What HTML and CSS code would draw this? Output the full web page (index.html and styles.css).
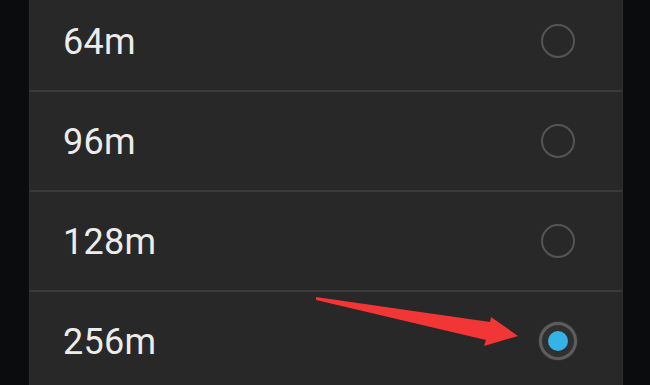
FILE: index.html
```html
<!DOCTYPE html>
<html>
<head>
<meta charset="utf-8">
<link rel="stylesheet" href="styles.css">
</head>
<body>
<div class="screen">
  <div class="panel">
    <div class="row"><span class="label">64m</span><span class="radio"></span></div>
    <div class="row"><span class="label">96m</span><span class="radio"></span></div>
    <div class="row"><span class="label">128m</span><span class="radio"></span></div>
    <div class="row"><span class="label">256m</span><span class="radio checked"></span></div>
  </div>
  <svg class="arrow" width="650" height="385" viewBox="0 0 650 385">
    <polygon points="316,297 490,322 491,317 518,336 484,346 486,340 316,300" fill="#f23535"/>
  </svg>
</div>
</body>
</html>
```

FILE: styles.css
```css
html, body {
  margin: 0;
  padding: 0;
  background: #0b0c0e;
  overflow: hidden;
}
.screen {
  position: relative;
  width: 650px;
  height: 385px;
  overflow: hidden;
}
.panel {
  width: 594px;
  margin-left: 29px;
  margin-top: -8px;
  background: #282828;
  display: flex;
  flex-direction: column;
  border-left: 1px solid #2e2e2e;
  border-right: 1px solid #2e2e2e;
  box-sizing: border-box;
}
.row {
  height: 100px;
  box-sizing: border-box;
  display: flex;
  align-items: center;
  justify-content: space-between;
  padding: 0 47px 0 33px;
  border-bottom: 2px solid #3a3a3a;
}
.label {
  font-family: Roboto, "Noto Sans", sans-serif;
  font-size: 36px;
  color: #ececec;
  line-height: 1;
  margin-top: 2px;
  letter-spacing: 0.3px;
}
.radio {
  width: 34px;
  height: 34px;
  border-radius: 50%;
  border: 2px solid #555555;
  box-sizing: border-box;
  display: flex;
  align-items: center;
  justify-content: center;
}
.radio.checked {
  width: 38px;
  height: 38px;
  margin-right: -2px;
  border: 3px solid #5d5d5d;
  background: #303030;
  box-shadow: 0 0 2px rgba(120,120,120,0.4);
}
.radio.checked::after {
  content: "";
  width: 20px;
  height: 20px;
  border-radius: 50%;
  background: #35b3e6;
}
.arrow {
  position: absolute;
  left: 0;
  top: 0;
}
```
